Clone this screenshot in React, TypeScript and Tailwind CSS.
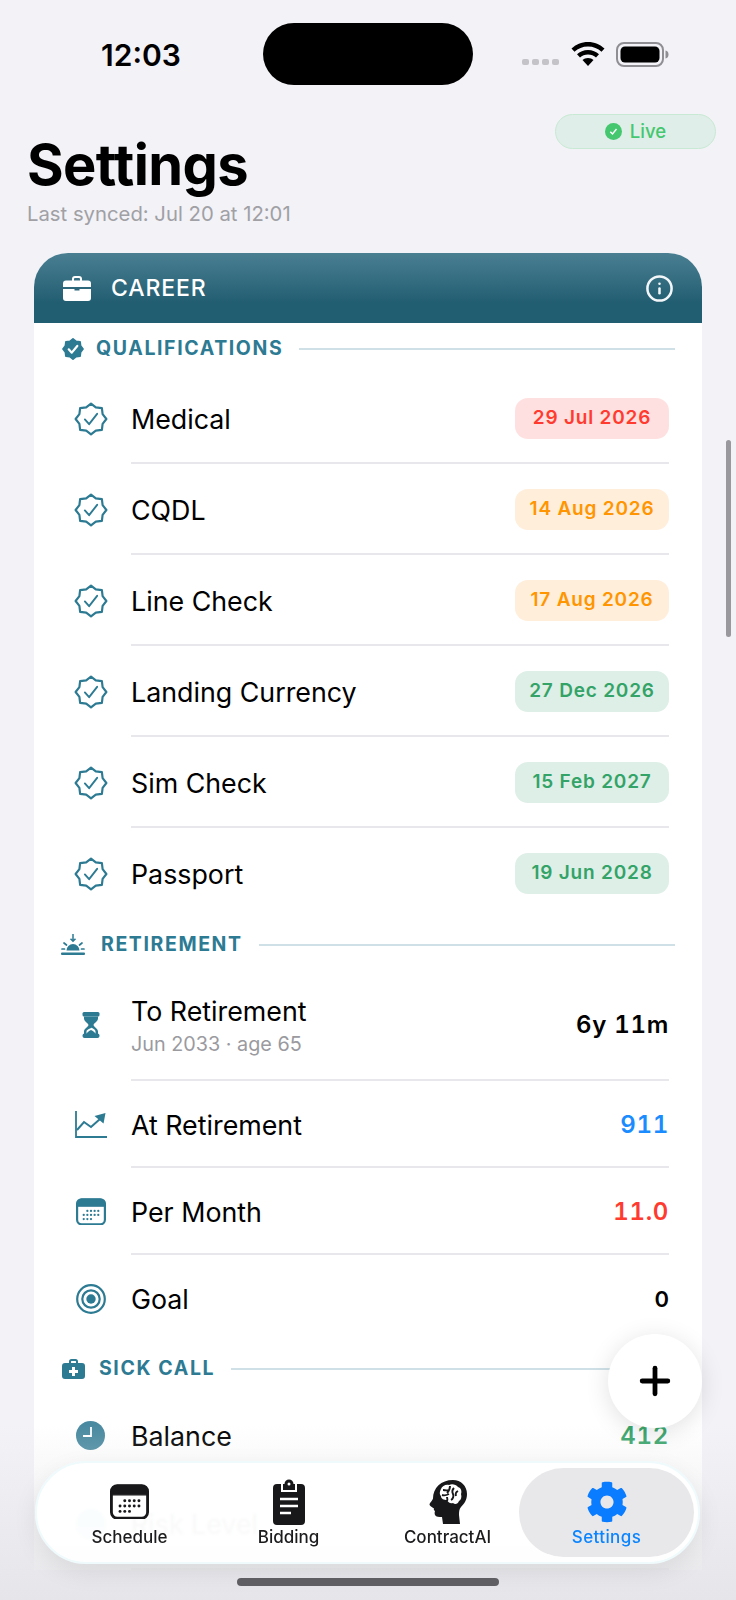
import React from "react";
import { Info, Plus } from "lucide-react";
import { FaCog } from "react-icons/fa";

const TEAL = "#2d7a93";

// 8-point seal outline, 16 vertices on a 36 box
const sealPoints = Array.from({ length: 16 }, (_, i) => {
  const r = i % 2 === 0 ? 16.300 : 13.300;
  const a = (Math.PI / 8) * i - Math.PI / 2;
  return `${(18 + r * Math.cos(a)).toFixed(2)},${(18 + r * Math.sin(a)).toFixed(2)}`;
}).join(" ");

const SealIcon = ({ filled, size }: { filled?: boolean; size: number }) => (
  <svg width={size} height={size} viewBox="0 0 36 36" fill="none">
    <polygon
      points={sealPoints}
      fill={filled ? TEAL : "none"}
      stroke={TEAL}
      strokeWidth={filled ? 3 : 2.300}
      strokeLinejoin="round"
    />
    <path
      d={filled ? "M11 18.500l5 5.500 9-11" : "M11.500 18.500l4.500 5 8.500-11"}
      stroke={filled ? "#fff" : TEAL}
      strokeWidth={filled ? 3.600 : 2}
      strokeLinecap="round"
      strokeLinejoin="round"
    />
  </svg>
);

const WifiIcon = () => (
  <svg width="34" height="24" viewBox="0 0 34 24">
    <path d="M17 0C10.500 0 4.800 2.500 .5 6.600l3 3.200C7 6.500 11.700 4.500 17 4.500s10 2 13.500 5.300l3-3.200C29.200 2.500 23.500 0 17 0z" fill="#000" />
    <path d="M17 8c-4.300 0-8.200 1.700-11 4.300l3 3.200c2-1.900 4.900-3.100 8-3.100s6 1.200 8 3.100l3-3.200C25.200 9.700 21.300 8 17 8z" fill="#000" />
    <path d="M17 16c-2.200 0-4.100.800-5.500 2.100L17 24l5.500-5.900C21.100 16.800 19.200 16 17 16z" fill="#000" />
  </svg>
);

const BatteryIcon = () => (
  <svg width="53" height="25" viewBox="0 0 53 25">
    <rect x="1" y="1" width="46" height="23" rx="7" fill="none" stroke="#8e8e93" strokeWidth="2" />
    <rect x="4.500" y="4.500" width="39" height="16" rx="4.500" fill="#000" />
    <path d="M49.500 8.500c2 .3 3 2 3 4s-1 3.700-3 4z" fill="#8e8e93" />
  </svg>
);

const BriefcaseIcon = () => (
  <svg width="28" height="25" viewBox="0 0 28 25" fill="#fff">
    <path d="M9 5V3a3 3 0 0 1 3-3h4a3 3 0 0 1 3 3v2h-2V3a1 1 0 0 0-1-1h-4a1 1 0 0 0-1 1v2z" />
    <path d="M3 4.500h22a3 3 0 0 1 3 3v3.500H0V7.500a3 3 0 0 1 3-3z" />
    <path d="M0 13h11.500v1.500h5V13H28v9a3 3 0 0 1-3 3H3a3 3 0 0 1-3-3z" />
  </svg>
);

const SunsetIcon = () => (
  <svg width="24" height="22" viewBox="0 0 24 22" fill={TEAL}>
    <path d="M12 0v7M9.500 4.800 12 7.300l2.500-2.500" fill="none" stroke={TEAL} strokeWidth="1.500" />
    <path d="M5.500 16.500a6.500 6.500 0 0 1 13 0z" />
    <path d="M3 9l2.500 2M21 9l-2.500 2M1 15h2.500M20.500 15H23" fill="none" stroke={TEAL} strokeWidth="1.700" strokeLinecap="round" />
    <rect x="0" y="18.500" width="24" height="2.500" rx="1" />
  </svg>
);

const MedKitIcon = () => (
  <svg width="23" height="20" viewBox="0 0 23 20" fill={TEAL}>
    <path d="M7 4V2.500A2.500 2.500 0 0 1 9.500 0h4A2.500 2.500 0 0 1 16 2.500V4h-2V2.500a.5.500 0 0 0-.5-.5h-4a.5.500 0 0 0-.5.500V4z" />
    <path fillRule="evenodd" d="M3 4h17a3 3 0 0 1 3 3v10a3 3 0 0 1-3 3H3a3 3 0 0 1-3-3V7a3 3 0 0 1 3-3zm7 4v3H7v3h3v3h3v-3h3v-3h-3V8z" />
  </svg>
);

const HourglassIcon = () => (
  <svg width="18" height="26" viewBox="0 0 18 26" fill={TEAL}>
    <rect x="0.500" y="0" width="17" height="4.500" rx="1.500" />
    <path d="M2 4.500h14v2c0 3-4 4.500-4.500 6.500.5 2 4.500 3.500 4.500 6.500v3h-2.500v-3c0-2-2.300-3-3.800-3.800C8 16.500 4.500 17.500 4.500 19.500v3H2v-3C2 16.500 6 15 6.500 13 6 11 2 9.500 2 6.500z" />
    <rect x="0.500" y="21.500" width="17" height="4.500" rx="2" />
    <path d="M4.500 22c.5-2 2.500-3 4.500-4 2 1 4 2 4.500 4z" />
  </svg>
);

const ChartIcon = () => (
  <svg width="32" height="27" viewBox="0 0 32 27" fill="none" stroke={TEAL} strokeWidth="1.800">
    <path d="M1 0v26h31" />
    <path d="M2 19l7-8 7 5 9-8" strokeWidth="2" />
    <path d="M19.500 5l11-3-2 10.500z" fill={TEAL} stroke="none" />
  </svg>
);

const SmallCalendar = ({ color, size = 30 }: { color: string; size?: number }) => {
  const dots: [number, number][] = [
    [12.500, 14], [16.500, 14], [20.500, 14], [24.500, 14],
    [8.500, 18.500], [12.500, 18.500], [16.500, 18.500], [20.500, 18.500], [24.500, 18.500],
    [8.500, 23], [12.500, 23], [16.500, 23],
  ];
  return (
    <svg width={size} height={size * 0.92} viewBox="0 0 33 30">
      <rect x="1.200" y="1.200" width="30.600" height="27.600" rx="5" fill="#fff" stroke={color} strokeWidth="2.400" />
      <path d="M1 9V6a5 5 0 0 1 5-5h21a5 5 0 0 1 5 5v3z" fill={color} stroke={color} />
      {dots.map(([x, y], i) => (
        <circle key={i} cx={x} cy={y} r="1.250" fill={color} />
      ))}
    </svg>
  );
};

const TargetIcon = () => (
  <svg width="30" height="30" viewBox="0 0 30 30" fill="none" stroke={TEAL}>
    <circle cx="15" cy="15" r="13.800" strokeWidth="2.200" />
    <circle cx="15" cy="15" r="8.700" strokeWidth="2.200" />
    <circle cx="15" cy="15" r="4.700" fill={TEAL} stroke="none" />
  </svg>
);

const ClockFilled = () => (
  <svg width="29" height="29" viewBox="0 0 29 29">
    <circle cx="14.500" cy="14.500" r="14.500" fill="#4a8aa0" />
    <path d="M15 6v9H7" fill="none" stroke="#fff" strokeWidth="1.800" />
  </svg>
);

const ClipboardIcon = () => (
  <svg width="32" height="46" viewBox="0 0 32 46" fill="#18181b">
    <path d="M10 5h1.500a4.500 4.500 0 0 1 9 0H22v6H10z" />
    <path d="M4 5h4v8h16V5h4a4 4 0 0 1 4 4v33a4 4 0 0 1-4 4H4a4 4 0 0 1-4-4V9a4 4 0 0 1 4-4z" />
    <circle cx="16" cy="5" r="1.500" fill="#fff" />
    <path d="M7 20h18M7 27h18M7 34h11" stroke="#fff" strokeWidth="2.400" />
  </svg>
);

const HeadBrainIcon = () => (
  <svg width="38" height="44" viewBox="0 0 38 44">
    <path
      d="M24 0C32 0 38 6 38 14c0 6-3 10-6 13-2 2-2 5-2 8l1 9H14l-1-7c-3 0-6 0-7-2-.5-1-.5-3 0-4-1-.5-1.500-1.500-1-2.500C3 27 .5 26 .5 24.500c0-1.500 3-4 3.500-6C4 8 12 0 24 0z"
      fill="#18181b"
    />
    <path
      d="M12 9c1-3 5-5 8-4 3-1.500 7-.5 9 2 3 1 4 4 3 7 1 3 0 6-2 7-1 3-4 4-6 2-3 1-5-1-6-3-3 0-6-1-6-4-2-2-1-5 0-7z"
      fill="#fff"
    />
    <path
      d="M14 10c2 0 3 1 5 0M21 6c0 3-1 5-3 7M13 15c3 1 5 0 7-1M25 8c-2 2-2 4-1 6s0 5-2 6M29 11c-2 1-3 2-2 5M18 17c0 1 1 2 0 4"
      fill="none"
      stroke="#18181b"
      strokeWidth="1.900"
    />
  </svg>
);

const Badge = ({ date, tone }: { date: string; tone: string }) => {
  const cls =
    tone === "red"
      ? "bg-[#ffe0e0] text-[#ff3b30]"
      : tone === "orange"
        ? "bg-[#ffeeda] text-[#ff9500]"
        : "bg-[#ddefe6] text-[#34a368]";
  return (
    <span className={`flex h-[41px] w-[154px] items-center justify-center rounded-[13px] text-[19px] font-semibold tracking-[0.8px] ${cls}`}>
      {date}
    </span>
  );
};

const SectionHeader = ({ icon, title, gap }: { icon: React.ReactNode; title: string; gap: string }) => (
  <div className="flex h-[50px] items-center pl-[27px] pr-[27px] pt-[2px]">
    <span className="flex w-[24px] items-center justify-center">{icon}</span>
    <span className={`text-[19.500px] font-bold tracking-[1.600px] text-[#2d7a93] ${gap}`}>{title}</span>
    <span className="ml-[16px] h-[2px] flex-1 bg-[#cfe1e7]" />
  </div>
);

const Value = ({ color, children }: { color: string; children: React.ReactNode }) => (
  <span className={`text-[24px] font-semibold tabular-nums tracking-[0.7px] ${color}`}>{children}</span>
);

const Row = ({
  icon,
  height,
  last,
  children,
  right,
}: {
  icon: React.ReactNode;
  height: string;
  last?: boolean;
  children: React.ReactNode;
  right: React.ReactNode;
}) => (
  <div className={`flex ${height}`}>
    <div className="flex w-[97px] items-center justify-center pl-[16px]">{icon}</div>
    <div className={`mr-[33px] flex flex-1 items-center justify-between ${last ? "" : "border-b-2 border-[#e8e8ec] pt-[2px]"}`}>
      <div className="text-[26.800px] leading-[34px] text-black">{children}</div>
      {right}
    </div>
  </div>
);

const qualifications = [
  { name: "Medical", date: "29 Jul 2026", tone: "red" },
  { name: "CQDL", date: "14 Aug 2026", tone: "orange" },
  { name: "Line Check", date: "17 Aug 2026", tone: "orange" },
  { name: "Landing Currency", date: "27 Dec 2026", tone: "green" },
  { name: "Sim Check", date: "15 Feb 2027", tone: "green" },
  { name: "Passport", date: "19 Jun 2028", tone: "green" },
];

const TabItem = ({ icon, label, active }: { icon: React.ReactNode; label: string; active?: boolean }) => (
  <div className={`flex flex-col items-center ${active ? "text-[#0a84ff]" : "text-[#1c1c1e]"}`}>
    <div className="flex h-[46px] items-center justify-center">{icon}</div>
    <span className={`mt-[2px] text-[17px] font-medium leading-[20px] ${active ? "tracking-[0.4px]" : ""}`}>{label}</span>
  </div>
);

export default function App() {
  return (
    <div className="relative h-[1600px] w-[736px] overflow-hidden bg-[#f2f2f7] font-[Inter,sans-serif]">
      {/* Status bar */}
      <div className="flex h-[62px] translate-y-[23px] items-center">
        <span className="ml-[101px] mt-[2px] w-[78px] text-[30px] font-semibold leading-none text-black">12:03</span>
        <div className="ml-[84px] h-[62px] w-[210px] rounded-[31px] bg-black" />
        <div className="ml-[49px] flex items-end gap-[3px] pt-[16px]">
          <span className="h-[6px] w-[7px] rounded-[2px] bg-[#c4c4c8]" />
          <span className="h-[6px] w-[7px] rounded-[2px] bg-[#c4c4c8]" />
          <span className="h-[6px] w-[7px] rounded-[2px] bg-[#c4c4c8]" />
          <span className="h-[6px] w-[7px] rounded-[2px] bg-[#c4c4c8]" />
        </div>
        <div className="ml-[12px]"><WifiIcon /></div>
        <div className="ml-[11px]"><BatteryIcon /></div>
      </div>

      {/* Title */}
      <div className="mt-[52px] flex items-start justify-between pl-[27px] pr-[20px]">
        <div>
          <h1 className="mt-[21px] text-[56px] font-bold leading-[60px] tracking-[-0.6px] text-black">Settings</h1>
          <p className="mt-[7px] text-[20.300px] leading-[24px] text-[#a0a0a5]">Last synced: Jul 20 at 12:01</p>
        </div>
        <div className="flex h-[35px] w-[161px] items-center justify-center gap-[8px] rounded-full border-[1.500px] border-[#c8ead4] bg-[#dfeee8]">
          <svg width="17" height="17" viewBox="0 0 17 17">
            <circle cx="8.500" cy="8.500" r="8.500" fill="#44c76f" />
            <path d="M5.300 8.700l2.200 2.300 4-5" fill="none" stroke="#fff" strokeWidth="1.400" />
          </svg>
          <span className="text-[18.500px] font-medium text-[#44c76f]">Live</span>
        </div>
      </div>

      {/* Card */}
      <div className="ml-[34px] mt-[27px] w-[668px] rounded-t-[34px] bg-white">
        <div className="flex h-[70px] items-center justify-between rounded-t-[34px] bg-gradient-to-b from-[#4a7f92] to-[#225e72] to-70% pl-[29px] pr-[28px]">
          <div className="flex items-center gap-[20px]">
            <BriefcaseIcon />
            <span className="text-[23px] font-medium tracking-[0.9px] text-white">CAREER</span>
          </div>
          <Info size={29} color="#f2f6f8" strokeWidth={2.100} />
        </div>

        <SectionHeader icon={<SealIcon filled size={22} />} title="QUALIFICATIONS" gap="ml-[11px]" />
        {qualifications.map((q, i) => (
          <Row
            key={q.name}
            height="h-[91px]"
            last={i === qualifications.length - 1}
            icon={<SealIcon size={34} />}
            right={<Badge date={q.date} tone={q.tone} />}
          >
            {q.name}
          </Row>
        ))}

        <SectionHeader icon={<SunsetIcon />} title="RETIREMENT" gap="ml-[16px]" />
        <Row height="h-[112px]" icon={<HourglassIcon />} right={<Value color="text-black">6y 11m</Value>}>
          <div className="leading-[32px]">To Retirement</div>
          <div className="mt-[5px] text-[19.800px] leading-[24px] text-[#9a9a9f]">Jun 2033 · age 65</div>
        </Row>
        <Row height="h-[87px]" icon={<ChartIcon />} right={<Value color="text-[#1a8cff]">911</Value>}>
          At Retirement
        </Row>
        <Row height="h-[87px]" icon={<SmallCalendar color={TEAL} />} right={<Value color="text-[#ff3b30]">11.0</Value>}>
          Per Month
        </Row>
        <Row height="h-[88px]" last icon={<TargetIcon />} right={<span className="text-[22px] font-semibold text-black">0</span>}>
          Goal
        </Row>

        <SectionHeader icon={<MedKitIcon />} title="SICK CALL" gap="ml-[14px]" />
        <Row height="h-[85px]" icon={<ClockFilled />} right={<Value color="text-[#3aa76d]">412</Value>}>
          Balance
        </Row>
        <Row
          height="h-[92px]"
          icon={<span className="h-[30px] w-[30px] rounded-full bg-[#4ab8d8]" />}
          right={<span className="h-[41px] w-[100px] rounded-[13px] bg-[#8fdca6]" />}
        >
          Risk Level
        </Row>
      </div>

      {/* Bottom fade */}
      <div className="pointer-events-none absolute inset-x-0 bottom-0 h-[175px] bg-gradient-to-b from-transparent to-[#e6e6ea]" />

      {/* Scrollbar */}
      <div className="absolute left-[726px] top-[440px] h-[197px] w-[5px] rounded-full bg-[#98989d]" />

      {/* Floating add button */}
      <div className="absolute left-[608px] top-[1334px] flex h-[94px] w-[94px] items-center justify-center rounded-full bg-white shadow-[0_4px_24px_rgba(0,0,0,0.12)]">
        <Plus size={44} color="#000" strokeWidth={2.600} />
      </div>

      {/* Tab bar */}
      <div className="absolute left-[35px] top-[1461px] grid h-[103px] w-[665px] grid-cols-[159px_159px_159px_175px] items-center rounded-[52px] border-2 border-[#eefafb] bg-white/[0.95] pl-[13px] shadow-[0_8px_24px_rgba(0,0,0,0.08)] backdrop-blur-[1px]">
        <TabItem icon={<SmallCalendar color="#18181b" size={39} />} label="Schedule" />
        <TabItem icon={<ClipboardIcon />} label="Bidding" />
        <TabItem icon={<HeadBrainIcon />} label="ContractAI" />
        <div className="-ml-[8px] flex h-[89px] w-[175px] items-center justify-center rounded-[45px] bg-[#e8e8ea]">
          <TabItem icon={<FaCog size={42} color="#0a7cff" />} label="Settings" active />
        </div>
      </div>

      {/* Home indicator */}
      <div className="absolute left-[237px] top-[1578px] h-[8px] w-[262px] rounded-full bg-[#5f5f63]" />
    </div>
  );
}
